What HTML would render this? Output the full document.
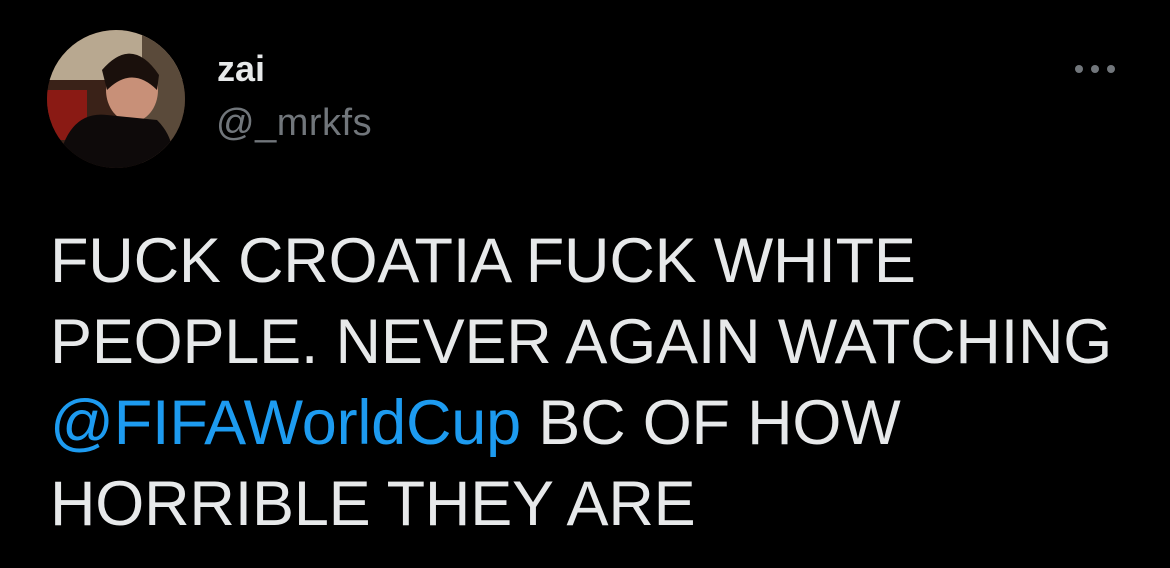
<!DOCTYPE html>
<html><head><meta charset="utf-8"><style>
html,body{margin:0;padding:0;background:#000;width:1170px;height:568px;overflow:hidden;font-family:"Liberation Sans",Arial,sans-serif}
.av{position:absolute;left:47px;top:30px;width:138px;height:138px;border-radius:50%;overflow:hidden;background:#2a1a14}
.name{position:absolute;left:217px;top:48px;color:#e7e9ea;font-weight:bold;font-size:36px}
.handle{position:absolute;left:216px;top:102px;color:#71767b;font-size:38px;letter-spacing:0.5px}
.dots{position:absolute;left:1074px;top:62px}
.txt{position:absolute;left:50px;top:221px;color:#e7e9ea;font-size:63px;line-height:81px;width:1110px;letter-spacing:-0.2px}
.l{color:#1d9bf0}
</style></head><body>
<div class="av"><svg width="138" height="138">
<rect width="138" height="138" fill="#3a2218"/>
<rect x="0" y="0" width="138" height="50" fill="#b8a890"/>
<rect x="95" y="0" width="43" height="138" fill="#5a4a3a"/>
<rect x="0" y="60" width="40" height="50" fill="#8a1a14"/>
<ellipse cx="85" cy="60" rx="26" ry="32" fill="#c89078"/>
<path d="M55 40 Q85 5 112 45 L110 60 Q85 35 60 60Z" fill="#1a100c"/>
<path d="M10 138 Q20 80 60 85 L110 90 Q130 110 125 138Z" fill="#0e0a0a"/>
</svg></div>
<div class="name">zai</div>
<div class="handle">@_mrkfs</div>
<div class="dots"><svg width="42" height="12"><circle cx="5" cy="6" r="4" fill="#71767b"/><circle cx="21" cy="6" r="4" fill="#71767b"/><circle cx="37" cy="6" r="4" fill="#71767b"/></svg></div>
<div class="txt">FUCK CROATIA FUCK WHITE<br>PEOPLE. NEVER AGAIN WATCHING<br><span class="l">@FIFAWorldCup</span> BC OF HOW<br>HORRIBLE THEY ARE</div>
</body></html>
